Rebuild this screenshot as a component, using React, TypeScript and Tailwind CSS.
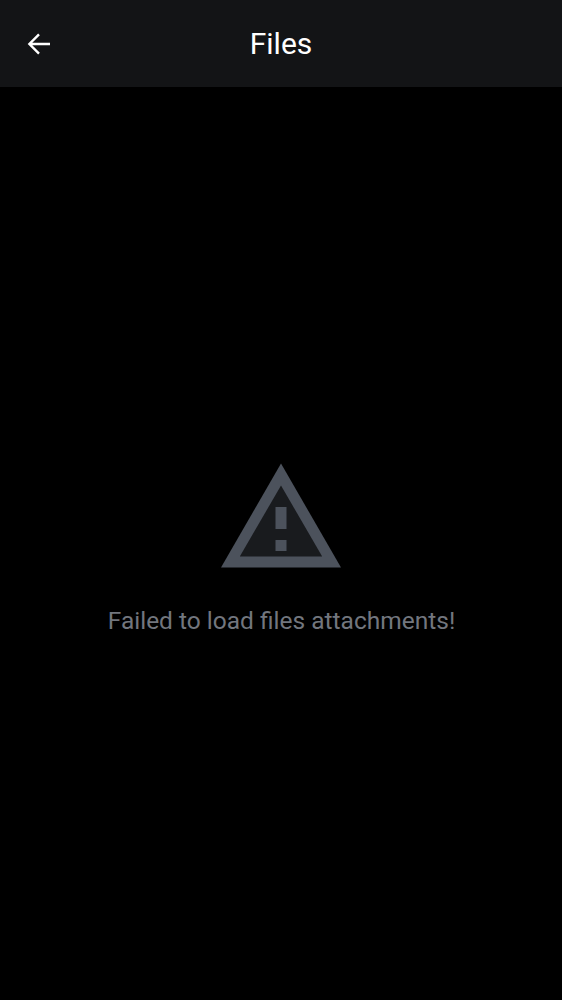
export default function App() {
  return (
    <div className="flex h-screen w-full flex-col bg-black font-[Roboto,sans-serif]">
      <header className="grid h-[87px] shrink-0 grid-cols-[1fr_auto_1fr] items-center bg-[#131416] px-[26px] pt-px text-white">
        <button aria-label="Back" className="w-fit">
          <svg className="size-[26px]" viewBox="0 0 26 26" fill="none" stroke="currentColor" strokeWidth="2.4">
            <path d="M24 13H4M13 3.400L3.400 13l9.600 9.600" />
          </svg>
        </button>
        <h1 className="text-[30px] leading-9">Files</h1>
        <span />
      </header>
      <main className="flex flex-1 flex-col items-center pt-[376px]">
        <svg className="h-[105px] w-[120px]" viewBox="0 0 120 105">
          <path d="M60 .5L120 104.500H0Z" fill="#4c525c" />
          <path d="M60 22.500L101.200 93.500H18.800Z" fill="#191b1e" />
          <path d="M54.500 44H65.500V66H54.500ZM54.500 77H65.500V88H54.500Z" fill="#4c525c" />
        </svg>
        <p className="mt-[37px] pl-px text-[24.5px] leading-8 text-[#72767e]">Failed to load files attachments!</p>
      </main>
    </div>
  );
}
